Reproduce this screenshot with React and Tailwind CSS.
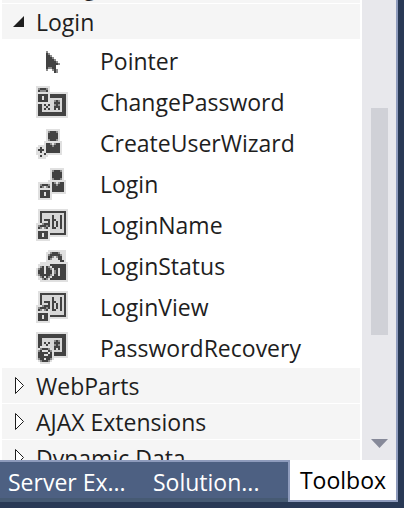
const INK = {
  '#': '#424242',
  '+': '#8c8c8c',
  '.': '#e0e0e0',
  o: '#d6d6d6',
};

const ICONS = {
  pointer: [
    '',
    '',
    '',
    '     +          ',
    '     #+         ',
    '     ##+        ',
    '     ###+       ',
    '     ####+      ',
    '     #####+     ',
    '     ######+    ',
    '     #####      ',
    '     #++##      ',
    '     +  +#+     ',
    '         #+     ',
  ],
  changePassword: [
    '.......         ',
    '.+###+.         ',
    '.#+++#.         ',
    '................',
    '.#####.########.',
    '.##.##.########.',
    '.##.##.oooooo##.',
    '.#####.oo+#+o##.',
    '.......oo###o##.',
    '.##o#o#oo+#+o##.',
    '.##oo#ooo###o##.',
    '.##o#o#oo#o#o##.',
    '.##oooooooooo##.',
    '.##############.',
    '.##############.',
    '................',
  ],
  createUser: [
    '',
    '     .......    ',
    '     .+###+.    ',
    '     .#####.    ',
    '     .#####.    ',
    '     .#####.    ',
    '     .+###+.    ',
    '    .........   ',
    '    .##+.+##.   ',
    ' ....###+###.   ',
    '..#..#######.   ',
    '.###.#######.   ',
    '..#..#######.   ',
    '....#........   ',
    ' .#...          ',
    ' ....           ',
  ],
  login: [
    '       .......  ',
    '       .+###+.  ',
    '       .#####.  ',
    '       .#####.  ',
    '       .#####.  ',
    '       .+###+.  ',
    '      ......... ',
    ' .......#+.+##. ',
    ' .+###+.##+###. ',
    ' .#+.+#.######. ',
    ' .......######. ',
    ' .#####.######. ',
    ' .##.##........ ',
    ' .##.##.        ',
    ' .#####.        ',
    ' .......        ',
  ],
  textBox: [
    ' ...............',
    ' .#############.',
    ' .#ooooooooooo#.',
    ' .#ooooo#ooo#o#.',
    ' .#ooooo#ooo#o#.',
    ' .#o###o##oo#o#.',
    ' .#ooo#o#o#o#o#.',
    '...+###o#o#o#o#.',
    '.+###+#o#o#o#o#.',
    '.#+.+#.o##oo#o#.',
    '.......ooooooo#.',
    '.#####.ooooooo#.',
    '.##.##.########.',
    '.##.##..........',
    '.#####.         ',
    '.......         ',
  ],
  unlocked: [
    '      ......... ',
    '     ..+###+... ',
    '     .+#####+.. ',
    '     .##+.+##.. ',
    '     .#+...##.. ',
    '     .......##. ',
    '  ..............',
    ' ......########.',
    ' .+#.#+.#######.',
    '.+##.##+.##.###.',
    '.###.###.+#.###.',
    '.###.###.+#.###.',
    '.+#####+.##.###.',
    ' .+#.#+.#######.',
    ' ..+#+.########.',
    '  ..............',
  ].map((row) => row),
  recovery: [
    '................',
    '.##############.',
    '.##############.',
    '.##oooooooooo##.',
    '.##oooooo+#+o##.',
    '.##o#o#oo###o##.',
    '.##oo#ooo+#+o##.',
    '.#.....oo###o##.',
    '..+###+.o#o#o##.',
    '.+#...#+.oooo##.',
    '.#####.#.######.',
    '.###..##.######.',
    '.#######........',
    '.+##.##+.       ',
    ' .+###+.        ',
    '  .....         ',
  ],
};

// Draws a 16 by 16 glyph, one square for each character of its grid.
function PixelIcon({ name }) {
  return (
    <svg className="h-8 w-8 shrink-0" viewBox="0 0 16 16" shapeRendering="crispEdges" aria-hidden="true">
      {ICONS[name].flatMap((row, y) =>
        [...row].map((c, x) => (c === ' ' ? null : <rect key={`${x}-${y}`} x={x} y={y} width="1" height="1" fill={INK[c]} />)),
      )}
    </svg>
  );
}

const TOOLS = [
  ['Pointer', 'pointer'],
  ['ChangePassword', 'changePassword'],
  ['CreateUserWizard', 'createUser'],
  ['Login', 'login'],
  ['LoginName', 'textBox'],
  ['LoginStatus', 'unlocked'],
  ['LoginView', 'textBox'],
  ['PasswordRecovery', 'recovery'],
];

function GroupHeader({ label, open = false }) {
  return (
    <button type="button" aria-expanded={open} className="mb-px flex h-[35px] w-full shrink-0 items-center gap-3 bg-[#f5f5f5] pl-[10px] text-left">
      <svg className="h-5 w-3 shrink-0" viewBox="0 0 12 20" aria-hidden="true">
        {open ? <path d="M12 4V15H1Z" fill="#1e1e1e" /> : <path d="M3.500 1.500V17.500L11.500 9.500Z" fill="#fff" stroke="#1e1e1e" />}
      </svg>
      <span>{label}</span>
    </button>
  );
}

export default function App() {
  return (
    <div className="flex h-screen flex-col overflow-hidden bg-[#293955] pr-[6px] pb-[6px] font-['Open_Sans','Noto_Sans',sans-serif] text-[23px] leading-8 text-[#1e1e1e]">
      <main className="flex min-h-0 flex-1 border-r-2 border-[#8e9bbc] bg-white">
        <div className="flex min-w-0 flex-1 flex-col overflow-hidden px-[2px]">
          <div className="flex h-1 shrink-0 flex-col justify-end overflow-hidden">
            <GroupHeader label="Navigation" />
          </div>
          <GroupHeader label="Login" open />
          <ul className="shrink-0">
            {TOOLS.map(([label, icon]) => (
              <li key={label}>
                <button type="button" className="flex h-[41px] w-full items-center gap-8 pl-[34px] text-left">
                  <PixelIcon name={icon} />
                  <span>{label}</span>
                </button>
              </li>
            ))}
          </ul>
          <GroupHeader label="WebParts" />
          <GroupHeader label="AJAX Extensions" />
          <GroupHeader label="Dynamic Data" />
        </div>
        <div className="flex w-[34px] shrink-0 flex-col items-center bg-[#e8e8ec] pt-[108px] pb-3">
          <div className="h-[227px] w-[17px] bg-[#d0d1d7]" />
          <svg className="mt-auto h-[9px] w-[17px]" viewBox="0 0 17 9" aria-hidden="true">
            <path d="M0 0H17L8.500 9Z" fill="#868999" />
          </svg>
        </div>
      </main>
      <nav className="flex h-[42px] shrink-0" aria-label="Tool windows">
        <div className="flex min-w-0 flex-1 border-t-2 border-b-4 border-t-[#8e9bbc] border-b-[#465a73] bg-[#4d6082] text-white">
          <button type="button" className="w-[145px] pt-1 pl-2 text-left whitespace-nowrap">Server Ex...</button>
          <button type="button" className="flex-1 pt-1 pl-2 text-left whitespace-nowrap">Solution...</button>
        </div>
        <button type="button" className="w-[110px] border-x-2 border-b-2 border-[#8e9bbc] bg-white text-center text-black">Toolbox</button>
      </nav>
    </div>
  );
}
